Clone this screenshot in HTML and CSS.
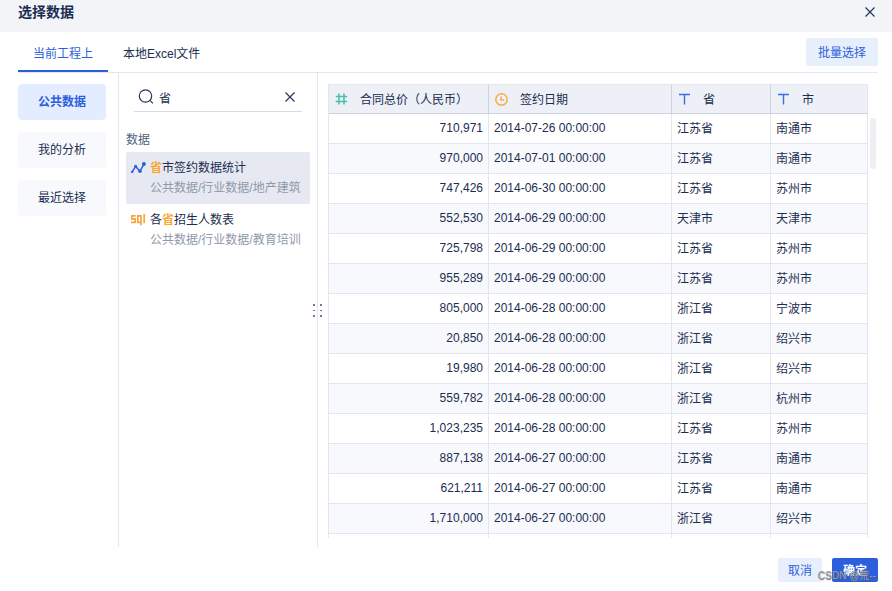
FILE: index.html
```html
<!DOCTYPE html>
<html lang="zh-CN">
<head>
    <meta charset="UTF-8">
    <meta name="viewport" content="width=device-width, initial-scale=1.0">
    <title>选择数据</title>
    <link rel="stylesheet" href="styles.css">
</head>
<body>
    <div class="dialog">
        <header class="dialog-header">
            <h1>选择数据</h1>
            <button class="icon-btn">
                <svg width="12" height="12" viewBox="0 0 12 12"><path d="M1.5 1.5l9 9M10.5 1.5l-9 9"/></svg>
            </button>
        </header>

        <div class="tab-bar">
            <nav class="tabs">
                <a class="tab active">当前工程上</a>
                <a class="tab">本地Excel文件</a>
            </nav>
            <button class="btn batch-btn">批量选择</button>
        </div>

        <main class="content">
            <aside class="sources">
                <button class="source active">公共数据</button>
                <button class="source">我的分析</button>
                <button class="source">最近选择</button>
            </aside>

            <section class="search-panel">
                <div class="search-box">
                    <svg class="search-icon" width="16" height="16" viewBox="0 0 16 16"><circle cx="7.5" cy="7" r="6.2"/><path d="M11.9 11.4l3 3"/></svg>
                    <span class="search-text">省</span>
                    <svg class="clear-icon" width="12" height="12" viewBox="0 0 12 12"><path d="M1.5 1.5l9 9M10.5 1.5l-9 9"/></svg>
                </div>
                <h2>数据</h2>
                <ul class="results">
                    <li class="result selected">
                        <svg width="15" height="12" viewBox="0 0 15 12">
                            <path class="chart-line" d="M1.2 9.8L4.6 4.4l4.4 4.8 4-7"/>
                            <g class="chart-dot"><circle cx="1.2" cy="9.9" r="1.2"/><circle cx="4.6" cy="4.2" r="1.5"/><circle cx="9" cy="9.2" r="1.7"/><circle cx="12.9" cy="2.1" r="2"/></g>
                        </svg>
                        <div>
                            <p class="name"><em>省</em>市签约数据统计</p>
                            <p class="path">公共数据/行业数据/地产建筑</p>
                        </div>
                    </li>
                    <li class="result">
                        <svg width="15" height="12" viewBox="0 0 15 12">
                            <path class="sql-line" d="M4.8 1.8H.9v3.1h3.2v3.5H0M10 11.2V1.8H6.8v6.6H10M13.2 0v9.2"/>
                        </svg>
                        <div>
                            <p class="name">各<em>省</em>招生人数表</p>
                            <p class="path">公共数据/行业数据/教育培训</p>
                        </div>
                    </li>
                </ul>
                <div class="drag-handle"><i></i><i></i><i></i><i></i><i></i><i></i></div>
            </section>

            <section class="preview">
                <div class="table-wrap">
                    <table>
                        <colgroup><col class="col-price"><col class="col-date"><col class="col-province"><col class="col-city"></colgroup>
                        <thead>
                            <tr>
                                <th><div><svg class="type-number" width="13" height="12" viewBox="0 0 13 12"><path d="M4 .5v11M9 .5v11M.8 3.5h11.4M.8 8.5h11.4"/></svg>合同总价（人民币）</div></th>
                                <th><div><svg class="type-date" width="13" height="13" viewBox="0 0 13 13"><circle cx="6.5" cy="6.5" r="5.7"/><path d="M6 3.5V7h3.2"/></svg>签约日期</div></th>
                                <th><div><svg class="type-text" width="13" height="12" viewBox="0 0 13 12"><path d="M1 1.5h11M6.5 1.5v10"/></svg>省</div></th>
                                <th><div><svg class="type-text" width="13" height="12" viewBox="0 0 13 12"><path d="M1 1.5h11M6.5 1.5v10"/></svg>市</div></th>
                            </tr>
                        </thead>
                        <tbody>
                            <tr><td>710,971</td><td>2014-07-26 00:00:00</td><td>江苏省</td><td>南通市</td></tr>
                            <tr><td>970,000</td><td>2014-07-01 00:00:00</td><td>江苏省</td><td>南通市</td></tr>
                            <tr><td>747,426</td><td>2014-06-30 00:00:00</td><td>江苏省</td><td>苏州市</td></tr>
                            <tr><td>552,530</td><td>2014-06-29 00:00:00</td><td>天津市</td><td>天津市</td></tr>
                            <tr><td>725,798</td><td>2014-06-29 00:00:00</td><td>江苏省</td><td>苏州市</td></tr>
                            <tr><td>955,289</td><td>2014-06-29 00:00:00</td><td>江苏省</td><td>苏州市</td></tr>
                            <tr><td>805,000</td><td>2014-06-28 00:00:00</td><td>浙江省</td><td>宁波市</td></tr>
                            <tr><td>20,850</td><td>2014-06-28 00:00:00</td><td>浙江省</td><td>绍兴市</td></tr>
                            <tr><td>19,980</td><td>2014-06-28 00:00:00</td><td>浙江省</td><td>绍兴市</td></tr>
                            <tr><td>559,782</td><td>2014-06-28 00:00:00</td><td>浙江省</td><td>杭州市</td></tr>
                            <tr><td>1,023,235</td><td>2014-06-28 00:00:00</td><td>江苏省</td><td>苏州市</td></tr>
                            <tr><td>887,138</td><td>2014-06-27 00:00:00</td><td>江苏省</td><td>南通市</td></tr>
                            <tr><td>621,211</td><td>2014-06-27 00:00:00</td><td>江苏省</td><td>南通市</td></tr>
                            <tr><td>1,710,000</td><td>2014-06-27 00:00:00</td><td>浙江省</td><td>绍兴市</td></tr>
                            <tr><td></td><td></td><td></td><td></td></tr>
                        </tbody>
                    </table>
                </div>
                <div class="scroll-thumb"></div>
            </section>
        </main>

        <footer class="dialog-footer">
            <button class="btn">取消</button>
            <button class="btn primary">确定</button>
            <span class="watermark">CSDN @荒--</span>
        </footer>
    </div>
</body>
</html>
```
FILE: styles.css
```css
* {
    box-sizing: border-box;
}

body {
    margin: 0;
    font-family: "Liberation Sans", "Noto Sans CJK SC", sans-serif;
    font-size: 12px;
    color: #1b2d50;
    background-color: #fff;
}

h1, h2, p, ul {
    margin: 0;
    padding: 0;
}

button {
    font: inherit;
    color: inherit;
    border: none;
    padding: 0;
    cursor: pointer;
}

svg {
    display: block;
    flex: none;
    fill: none;
    stroke: #24385b;
    stroke-width: 1.2;
}

.dialog {
    height: 591px;
    overflow: hidden;
}

.dialog-header {
    display: flex;
    justify-content: space-between;
    height: 32px;
    padding: 0 16px 0 18px;
    background-color: #f2f4f8;
}

.dialog-header h1 {
    font-size: 14px;
    line-height: 24px;
}

.icon-btn {
    height: 24px;
    background: none;
}

.tab-bar {
    display: flex;
    justify-content: space-between;
    height: 41px;
    margin: 0 14px 0 18px;
    border-bottom: 1px solid #e3e6ef;
}

.tabs {
    display: flex;
}

.tab {
    height: 40px;
    padding: 0 15px;
    line-height: 45px;
}

.tab.active {
    color: #2d5fdc;
    border-bottom: 2px solid #2d5fdc;
}

.btn {
    height: 24px;
    padding-bottom: 2px;
    border-radius: 2px;
    background-color: #e8effc;
    color: #2d5fdc;
}

.batch-btn {
    width: 72px;
    height: 28px;
    margin-top: 6px;
}

.content {
    display: flex;
    height: 474px;
}

.sources {
    display: flex;
    flex-direction: column;
    gap: 12px;
    width: 119px;
    padding: 11px 12px 0 18px;
    border-right: 1px solid #e3e6ef;
}

.source {
    height: 36px;
    padding-bottom: 3px;
    border-radius: 4px;
    background-color: #f7f9fd;
}

.source.active {
    background-color: #e4edff;
    color: #2d5fdc;
    font-weight: bold;
}

.search-panel {
    position: relative;
    width: 199px;
    padding: 11px 7px 0;
    border-right: 1px solid #e3e6ef;
}

.search-box {
    display: flex;
    align-items: center;
    height: 28px;
    margin: 0 8px;
    padding: 0 6px 1px 4px;
    border-bottom: 1px solid #d6dae4;
}

.search-text {
    flex: 1;
    margin-left: 5px;
}

.search-panel h2 {
    margin-top: 18px;
    font-size: 12px;
    font-weight: normal;
    line-height: 20px;
    color: #52617c;
}

.results {
    margin-top: 2px;
    list-style: none;
}

.result {
    display: flex;
    gap: 4px;
    height: 52px;
    padding: 6px 0 0 5px;
    border-radius: 2px;
    line-height: 20px;
    white-space: nowrap;
}

.result svg {
    margin-top: 4px;
}

.result.selected {
    background-color: #e6e9f1;
}

.result em {
    font-style: normal;
    font-weight: bold;
    color: #fba62f;
}

.path {
    color: #8f99ab;
}

.chart-line {
    stroke: #2d5fdc;
    stroke-width: 1.5;
}

.chart-dot {
    fill: #2d5fdc;
    stroke: none;
}

.sql-line {
    stroke: #f5a83c;
    stroke-width: 1.7;
}

.drag-handle {
    position: absolute;
    top: 231px;
    right: -5px;
    display: grid;
    grid-template-columns: 2px 2px;
    gap: 4px 5px;
}

.drag-handle i {
    height: 1.5px;
    background-color: #6d7a92;
}

.preview {
    display: flex;
    gap: 2px;
    padding: 11px 0 0 10px;
}

.table-wrap {
    width: 540px;
    height: 454px;
    overflow: hidden;
    border-left: 1px solid #e3e6ef;
}

table {
    width: 539px;
    table-layout: fixed;
    border-collapse: separate;
    border-spacing: 0;
}

.col-price { width: 160px; }
.col-date { width: 183px; }
.col-province { width: 99px; }
.col-city { width: 97px; }

th {
    height: 30px;
    padding: 0 6px 2px;
    border: 1px solid #ccd2dc;
    border-top-color: #e3e6ef;
    border-left: none;
    background-color: #edf0f6;
    font-weight: normal;
}

th:last-child {
    border-right-color: #e3e6ef;
}

th div {
    display: flex;
    align-items: center;
    gap: 12px;
}

th svg {
    position: relative;
    top: 1px;
}

td {
    height: 30px;
    padding: 0 5px 2px;
    border: 1px solid #e3e6ef;
    border-width: 0 1px 1px 0;
}

td:first-child {
    text-align: right;
}

tbody tr:nth-child(even) {
    background-color: #f8f9fd;
}

.type-number {
    stroke: #4dbbab;
    stroke-width: 1.5;
}

.type-date {
    stroke: #f5ad45;
    stroke-width: 1.5;
}

.type-text {
    stroke: #3b6de3;
    stroke-width: 1.4;
}

.scroll-thumb {
    width: 6px;
    height: 51px;
    margin-top: 34px;
    border-radius: 3px;
    background-color: #eeeff1;
}

.dialog-footer {
    position: relative;
    display: flex;
    justify-content: flex-end;
    gap: 10px;
    padding: 11px 14px 0 0;
}

.dialog-footer .btn {
    width: 44px;
}

.dialog-footer .primary {
    width: 46px;
    background-color: #2d5fdc;
    color: #fff;
    font-weight: bold;
}

.watermark {
    position: absolute;
    top: 20px;
    right: 16px;
    font-size: 10px;
    line-height: 18px;
    color: #9a9fa9;
    text-shadow: 0 1px 1px #59606c;
    white-space: nowrap;
}
```
